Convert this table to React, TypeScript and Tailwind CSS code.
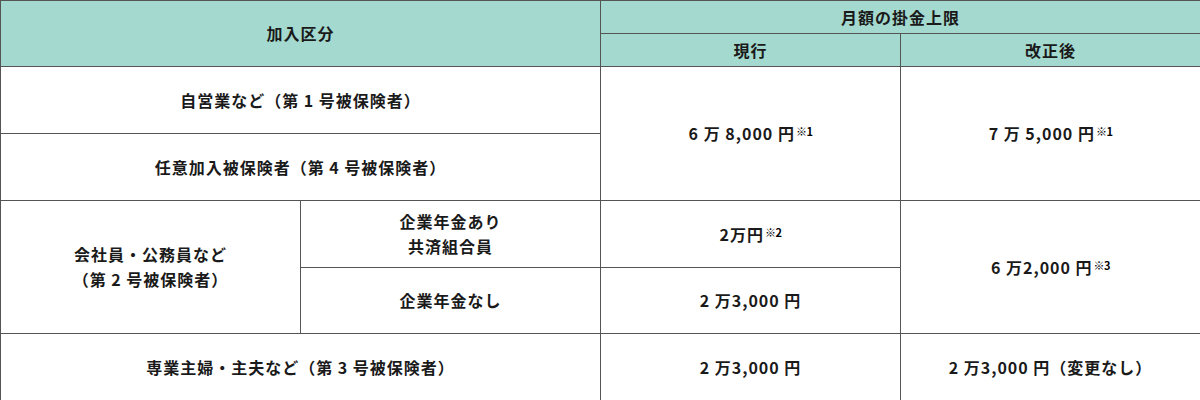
import React from "react";

const th = "border border-[#555] bg-[#a3d9ce] text-center align-middle font-bold";
const td = "border border-[#555] bg-white text-center align-middle font-bold";

const Note = ({ n }: { n: string }) => (
  <sup className="text-[11px] font-bold text-black relative -top-[4px] ml-[1px] tracking-[-0.5px]">※{n}</sup>
);

const App = () => {
  return (
    <div className="w-[1200px] h-[400px] bg-white">
      <table
        className="w-[1200px] table-fixed border-collapse border border-[#222] text-[16px] leading-[25px] tracking-[1px] text-[#1a1a1a]"
        style={{ fontFamily: '"Noto Sans CJK JP", "Noto Sans", sans-serif' }}
      >
        <colgroup>
          <col className="w-[300px]" />
          <col className="w-[300px]" />
          <col className="w-[300px]" />
          <col className="w-[300px]" />
        </colgroup>
        <tbody>
          <tr className="h-[33px]">
            <th colSpan={2} rowSpan={2} className={th}>
              加入区分
            </th>
            <th colSpan={2} className={th}>
              月額の掛金上限
            </th>
          </tr>
          <tr className="h-[33px]">
            <th className={th}>現行</th>
            <th className={th}>改正後</th>
          </tr>
          <tr className="h-[67px]">
            <td colSpan={2} className={td}>
              自営業など（第 1 号被保険者）
            </td>
            <td rowSpan={2} className={td}>
              6 万 8,000 円<Note n="1" />
            </td>
            <td rowSpan={2} className={td}>
              7 万 5,000 円<Note n="1" />
            </td>
          </tr>
          <tr className="h-[67px]">
            <td colSpan={2} className={td}>
              任意加入被保険者（第 4 号被保険者）
            </td>
          </tr>
          <tr className="h-[67px]">
            <td rowSpan={2} className={td}>
              会社員・公務員など
              <br />
              （第 2 号被保険者）
            </td>
            <td className={td}>
              企業年金あり
              <br />
              共済組合員
            </td>
            <td className={td}>
              2万円<Note n="2" />
            </td>
            <td rowSpan={2} className={td}>
              6 万2,000 円<Note n="3" />
            </td>
          </tr>
          <tr className="h-[66px]">
            <td className={td}>企業年金なし</td>
            <td className={td}>2 万3,000 円</td>
          </tr>
          <tr className="h-[67px]">
            <td colSpan={2} className={td}>
              専業主婦・主夫など（第 3 号被保険者）
            </td>
            <td className={td}>2 万3,000 円</td>
            <td className={td}>2 万3,000 円（変更なし）</td>
          </tr>
        </tbody>
      </table>
    </div>
  );
};

export default App;
